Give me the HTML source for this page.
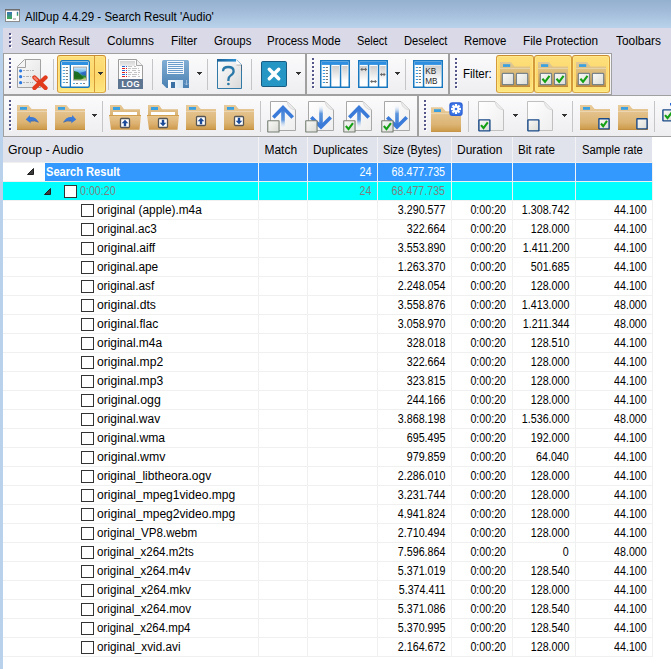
<!DOCTYPE html>
<html><head><meta charset="utf-8"><style>
html,body{margin:0;padding:0;}
body{width:671px;height:669px;overflow:hidden;position:relative;background:#fff;font-family:"Liberation Sans", sans-serif;font-size:12px;}
.t{position:absolute;white-space:nowrap;line-height:14px;font-size:12px;}
svg{display:block;}
</style></head><body>
<div style="position:absolute;left:0px;top:0px;width:671px;height:28px;background:linear-gradient(#95b1d0,#a1bbd9 40%,#bad3eb)"></div><svg style="position:absolute;left:5px;top:9px" width="15" height="13" viewBox="0 0 15 13"><rect x="0.5" y="0.5" width="14" height="12" fill="#fdfdfd" stroke="#8c8c8c"/><rect x="0" y="0" width="15" height="1.6" fill="#6e6e6e"/><linearGradient id="ga" x1="0" y1="0" x2="0" y2="1"><stop offset="0" stop-color="#3a70b8"/><stop offset="1" stop-color="#40b050"/></linearGradient><rect x="2" y="3" width="5" height="7" fill="url(#ga)"/><rect x="11.8" y="2.8" width="1.4" height="4" fill="url(#ga)"/><rect x="8" y="9" width="3" height="2" fill="#c4c4c4"/></svg><div class="t" style="left:25px;top:10px;color:#000;transform:scaleX(0.96);transform-origin:left center;">AllDup 4.4.29 - Search Result 'Audio'</div><div style="position:absolute;left:0px;top:28px;width:3px;height:641px;background:#b9d1ea"></div><div style="position:absolute;left:3px;top:28px;width:668px;height:25px;background:#d9d9e7"></div><div style="position:absolute;left:10px;top:34px;width:2px;height:2px;background:#fff"></div><div style="position:absolute;left:10px;top:38px;width:2px;height:2px;background:#fff"></div><div style="position:absolute;left:10px;top:42px;width:2px;height:2px;background:#fff"></div><div style="position:absolute;left:10px;top:46px;width:2px;height:2px;background:#fff"></div><div style="position:absolute;left:9px;top:33px;width:2px;height:2px;background:#56568a"></div><div style="position:absolute;left:9px;top:37px;width:2px;height:2px;background:#56568a"></div><div style="position:absolute;left:9px;top:41px;width:2px;height:2px;background:#56568a"></div><div style="position:absolute;left:9px;top:45px;width:2px;height:2px;background:#56568a"></div><div class="t" style="left:21px;top:34px;color:#000;transform:scaleX(0.91);transform-origin:left center;">Search Result</div><div class="t" style="left:106.8px;top:34px;color:#000;transform:scaleX(0.99);transform-origin:left center;">Columns</div><div class="t" style="left:171.2px;top:34px;color:#000;transform:scaleX(0.98);transform-origin:left center;">Filter</div><div class="t" style="left:213.6px;top:34px;color:#000;transform:scaleX(0.95);transform-origin:left center;">Groups</div><div class="t" style="left:267.2px;top:34px;color:#000;transform:scaleX(0.96);transform-origin:left center;">Process Mode</div><div class="t" style="left:357.3px;top:34px;color:#000;transform:scaleX(0.91);transform-origin:left center;">Select</div><div class="t" style="left:404.3px;top:34px;color:#000;transform:scaleX(0.93);transform-origin:left center;">Deselect</div><div class="t" style="left:464.3px;top:34px;color:#000;transform:scaleX(0.95);transform-origin:left center;">Remove</div><div class="t" style="left:523px;top:34px;color:#000;transform:scaleX(0.98);transform-origin:left center;">File Protection</div><div class="t" style="left:615.5px;top:34px;color:#000;transform:scaleX(0.99);transform-origin:left center;">Toolbars</div><div style="position:absolute;left:3px;top:53px;width:668px;height:43px;background:#d9d9e7"></div><div style="position:absolute;left:3px;top:53px;width:303px;height:42px;background:linear-gradient(#fbfbfc,#eeeef1);box-sizing:border-box;border:1px solid #a0a0a0"></div><div style="position:absolute;left:10px;top:59px;width:2px;height:2px;background:#fff"></div><div style="position:absolute;left:10px;top:63px;width:2px;height:2px;background:#fff"></div><div style="position:absolute;left:10px;top:67px;width:2px;height:2px;background:#fff"></div><div style="position:absolute;left:10px;top:71px;width:2px;height:2px;background:#fff"></div><div style="position:absolute;left:10px;top:75px;width:2px;height:2px;background:#fff"></div><div style="position:absolute;left:10px;top:79px;width:2px;height:2px;background:#fff"></div><div style="position:absolute;left:10px;top:83px;width:2px;height:2px;background:#fff"></div><div style="position:absolute;left:10px;top:87px;width:2px;height:2px;background:#fff"></div><div style="position:absolute;left:9px;top:58px;width:2px;height:2px;background:#56568a"></div><div style="position:absolute;left:9px;top:62px;width:2px;height:2px;background:#56568a"></div><div style="position:absolute;left:9px;top:66px;width:2px;height:2px;background:#56568a"></div><div style="position:absolute;left:9px;top:70px;width:2px;height:2px;background:#56568a"></div><div style="position:absolute;left:9px;top:74px;width:2px;height:2px;background:#56568a"></div><div style="position:absolute;left:9px;top:78px;width:2px;height:2px;background:#56568a"></div><div style="position:absolute;left:9px;top:82px;width:2px;height:2px;background:#56568a"></div><div style="position:absolute;left:9px;top:86px;width:2px;height:2px;background:#56568a"></div><svg style="position:absolute;left:16px;top:58px" width="32" height="32" viewBox="0 0 32 32"><linearGradient id="gc1" x1="0" y1="0" x2="1" y2="1"><stop offset="0" stop-color="#fbfbfb"/><stop offset="1" stop-color="#e2e2e2"/></linearGradient><path d="M1.5 8.5L8.5 1.5H24.5V29.5H1.5Z" fill="url(#gc1)" stroke="#a2a2a2"/><path d="M9.5 1.5V9.5H1.5" fill="#f4f4f4" stroke="#a2a2a2"/><circle cx="4.6" cy="12.8" r="1.6" fill="#2a78e0"/><circle cx="4.6" cy="18.7" r="1.6" fill="#2a78e0"/><circle cx="4.6" cy="24.7" r="1.6" fill="#2a78e0"/><path d="M7 12.5H18M7 18.5H17M7 24.5H17" stroke="#b4b4b4" stroke-width="1" stroke-dasharray="2 1 3 1 1 1"/><path d="M18.5 19.5L29.5 30M29.5 19.5L18.5 30" stroke="#e23a1c" stroke-width="4.3" stroke-linecap="round"/><path d="M18.5 19.5L21 22" stroke="#f08070" stroke-width="2" stroke-linecap="round"/></svg><div style="position:absolute;left:53px;top:59px;width:1px;height:31px;background:#c5c5c8"></div><div style="position:absolute;left:57px;top:55px;width:49px;height:38px;background:linear-gradient(#fde07c,#fdd76c 55%,#fde67e);border:1px solid;border-color:#c98c30 #d49a3a #dcac46 #d49a3a;border-radius:3px;box-sizing:border-box;box-shadow:inset 0 0 0 1px rgba(255,238,150,0.55)"></div><div style="position:absolute;left:94px;top:56px;width:1px;height:36px;background:#d49a3a"></div><svg style="position:absolute;left:60px;top:60px" width="30" height="28" viewBox="0 0 30 28"><rect x="0.7" y="0.7" width="28.6" height="26.6" rx="1.5" fill="#fff" stroke="#1778c0" stroke-width="1.4"/><rect x="2" y="2" width="26" height="3" fill="#2e90e0"/><rect x="9.7" y="5" width="1.3" height="22" fill="#1778c0"/><rect x="2.8" y="7" width="2.2" height="1" fill="#5aaae0"/><rect x="5.8" y="7" width="2.2" height="1" fill="#808080"/><rect x="2.8" y="10" width="2.2" height="1" fill="#5aaae0"/><rect x="5.8" y="10" width="2.2" height="1" fill="#808080"/><rect x="2.8" y="13" width="2.2" height="1" fill="#5aaae0"/><rect x="5.8" y="13" width="2.2" height="1" fill="#808080"/><rect x="2.8" y="16" width="2.2" height="1" fill="#5aaae0"/><rect x="5.8" y="16" width="2.2" height="1" fill="#808080"/><rect x="2.8" y="19" width="2.2" height="1" fill="#5aaae0"/><rect x="5.8" y="19" width="2.2" height="1" fill="#808080"/><rect x="2.8" y="22" width="2.2" height="1" fill="#5aaae0"/><rect x="5.8" y="22" width="2.2" height="1" fill="#808080"/><rect x="13" y="6.6" width="14" height="14" fill="#a6a6a6"/><linearGradient id="gp1" x1="0" y1="0" x2="0" y2="1"><stop offset="0" stop-color="#c8e8fa"/><stop offset="0.35" stop-color="#70b8ee"/><stop offset="0.5" stop-color="#3a88d0"/><stop offset="0.75" stop-color="#2a8a30"/><stop offset="1" stop-color="#e0e890"/></linearGradient><rect x="14" y="7.6" width="12" height="12" fill="url(#gp1)"/><path d="M14 11L18 12L21 15L24 18L21 19.6H14Z" fill="#1a6a18" opacity="0.9"/><path d="M20 13L26 11V15.5L23 15Z" fill="#2a64c0" opacity="0.85"/><rect x="13" y="23" width="2" height="1" fill="#5aaae0"/><rect x="16" y="23" width="2" height="1" fill="#808080"/><rect x="20" y="23" width="2" height="1" fill="#5aaae0"/><rect x="23" y="23" width="2" height="1" fill="#808080"/></svg><div style="position:absolute;left:98px;top:72px;width:5px;height:1px;background:#333"></div><div style="position:absolute;left:99px;top:73px;width:3px;height:1px;background:#333"></div><div style="position:absolute;left:100px;top:74px;width:1px;height:1px;background:#333"></div><div style="position:absolute;left:108px;top:59px;width:1px;height:31px;background:#c5c5c8"></div><svg style="position:absolute;left:118px;top:59px" width="26" height="31" viewBox="0 0 26 31"><path d="M0.5 0.5H18.5L24.5 6.5V29.5H0.5Z" fill="#fcfcfc" stroke="#9c9c9c"/><path d="M18.5 0.5V6.5H24.5" fill="#f2f2f2" stroke="#a8a8a8"/><linearGradient id="glg" x1="0" y1="0" x2="0" y2="1"><stop offset="0" stop-color="#d4d4d4"/><stop offset="1" stop-color="#ececec"/></linearGradient><rect x="2" y="2" width="15" height="5" fill="url(#glg)"/><rect x="4" y="7" width="3" height="1" fill="#2a6ad0"/><rect x="8" y="7" width="1" height="1" fill="#2a6ad0"/><path d="M10 7.5H22" stroke="#c4c4c4" stroke-width="1" stroke-dasharray="4 2 2 9"/><rect x="4" y="9" width="3" height="1" fill="#e02020"/><rect x="8" y="9" width="1" height="1" fill="#e02020"/><path d="M10 9.5H22" stroke="#c4c4c4" stroke-width="1" stroke-dasharray="3 1 5 1 1 9"/><rect x="4" y="11" width="3" height="1" fill="#2a6ad0"/><rect x="8" y="11" width="1" height="1" fill="#2a6ad0"/><path d="M10 11.5H22" stroke="#c4c4c4" stroke-width="1" stroke-dasharray="2 2 4 2 3"/><rect x="4" y="13" width="3" height="1" fill="#e02020"/><rect x="8" y="13" width="1" height="1" fill="#e02020"/><path d="M10 13.5H22" stroke="#c4c4c4" stroke-width="1" stroke-dasharray="4 2 3 1 2"/><rect x="4" y="15" width="3" height="1" fill="#2a6ad0"/><rect x="8" y="15" width="1" height="1" fill="#2a6ad0"/><path d="M10 15.5H22" stroke="#c4c4c4" stroke-width="1" stroke-dasharray="3 1 5 1 1 9"/><rect x="4" y="17" width="3" height="1" fill="#e02020"/><rect x="8" y="17" width="1" height="1" fill="#e02020"/><path d="M10 17.5H22" stroke="#c4c4c4" stroke-width="1" stroke-dasharray="2 2 4 2 3"/><rect x="0" y="20" width="25" height="10" fill="#5e7591"/><text x="12.6" y="27.9" font-size="8.2" font-family="Liberation Sans" fill="#fff" text-anchor="middle" font-weight="bold" letter-spacing="0.2">LOG</text></svg><div style="position:absolute;left:152px;top:59px;width:1px;height:31px;background:#c5c5c8"></div><svg style="position:absolute;left:162px;top:60px" width="27" height="28" viewBox="0 0 27 28"><linearGradient id="gs1" x1="0" y1="0" x2="0" y2="1"><stop offset="0" stop-color="#82aed4"/><stop offset="1" stop-color="#4a80b2"/></linearGradient><linearGradient id="gs2" x1="0" y1="0" x2="1" y2="0"><stop offset="0" stop-color="#ffffff"/><stop offset="1" stop-color="#cfe2f0"/></linearGradient><path d="M1.5 0H25.5Q27 0 27 1.5V28H4.5L0 23.5V1.5Q0 0 1.5 0Z" fill="url(#gs1)"/><rect x="5" y="1" width="17" height="13" fill="#f4f8fc"/><rect x="6" y="2" width="15" height="1" fill="#6a9ccc"/><rect x="6" y="4" width="15" height="1" fill="#6a9ccc"/><rect x="6" y="6" width="15" height="1" fill="#6a9ccc"/><rect x="6" y="8" width="15" height="1" fill="#6a9ccc"/><rect x="6" y="10" width="15" height="1" fill="#6a9ccc"/><rect x="6" y="12" width="15" height="1" fill="#6a9ccc"/><rect x="6" y="20" width="15" height="8" fill="url(#gs2)"/><rect x="9" y="22" width="4" height="6" fill="#3a70a4"/><path d="M24.5 20V25M22.8 23.3L24.5 25L26.2 23.3" stroke="#a8c8e4" stroke-width="0.8" fill="none"/></svg><div style="position:absolute;left:197px;top:72px;width:5px;height:1px;background:#333"></div><div style="position:absolute;left:198px;top:73px;width:3px;height:1px;background:#333"></div><div style="position:absolute;left:199px;top:74px;width:1px;height:1px;background:#333"></div><div style="position:absolute;left:207px;top:59px;width:1px;height:31px;background:#c5c5c8"></div><svg style="position:absolute;left:217px;top:59px" width="25" height="31" viewBox="0 0 25 31"><linearGradient id="gh1" x1="0" y1="0" x2="1" y2="1"><stop offset="0" stop-color="#ffffff"/><stop offset="0.6" stop-color="#e8e8e8"/><stop offset="1" stop-color="#d8d8d8"/></linearGradient><linearGradient id="gh2" x1="0" y1="0" x2="1" y2="0"><stop offset="0" stop-color="#1a5f96"/><stop offset="1" stop-color="#2d8fd0"/></linearGradient><path d="M0.5 0.5H19L24.5 6V29.5H0.5Z" fill="url(#gh1)" stroke="#3279a8"/><rect x="0" y="0" width="19" height="2.6" fill="url(#gh2)"/><path d="M19 0.5L24.5 6H19.5Z" fill="#fff"/><path d="M19.5 6H24.5V12" fill="none" stroke="#555" stroke-width="0.8" opacity="0.5"/><path d="M6 12.2Q6 8 11.3 8Q16.6 8 16.6 12.2Q16.6 14.6 13.8 16.4Q11.4 18 11.4 20.8V22" fill="none" stroke="#2a78a8" stroke-width="2.3"/><circle cx="11.4" cy="25" r="1.35" fill="#2a78a8"/></svg><div style="position:absolute;left:251px;top:59px;width:1px;height:31px;background:#c5c5c8"></div><svg style="position:absolute;left:261px;top:61px" width="26" height="26" viewBox="0 0 26 26"><rect x="0.5" y="0.5" width="25" height="25" rx="1.3" fill="#2696c4" stroke="#185c82"/><path d="M8.3 8.3L17.7 17.7M17.7 8.3L8.3 17.7" stroke="#fff" stroke-width="3.5" stroke-linecap="round"/></svg><div style="position:absolute;left:296px;top:72px;width:5px;height:1px;background:#333"></div><div style="position:absolute;left:297px;top:73px;width:3px;height:1px;background:#333"></div><div style="position:absolute;left:298px;top:74px;width:1px;height:1px;background:#333"></div><div style="position:absolute;left:306px;top:53px;width:143px;height:42px;background:linear-gradient(#fbfbfc,#eeeef1);box-sizing:border-box;border:1px solid #a0a0a0"></div><div style="position:absolute;left:313px;top:59px;width:2px;height:2px;background:#fff"></div><div style="position:absolute;left:313px;top:63px;width:2px;height:2px;background:#fff"></div><div style="position:absolute;left:313px;top:67px;width:2px;height:2px;background:#fff"></div><div style="position:absolute;left:313px;top:71px;width:2px;height:2px;background:#fff"></div><div style="position:absolute;left:313px;top:75px;width:2px;height:2px;background:#fff"></div><div style="position:absolute;left:313px;top:79px;width:2px;height:2px;background:#fff"></div><div style="position:absolute;left:313px;top:83px;width:2px;height:2px;background:#fff"></div><div style="position:absolute;left:313px;top:87px;width:2px;height:2px;background:#fff"></div><div style="position:absolute;left:312px;top:58px;width:2px;height:2px;background:#56568a"></div><div style="position:absolute;left:312px;top:62px;width:2px;height:2px;background:#56568a"></div><div style="position:absolute;left:312px;top:66px;width:2px;height:2px;background:#56568a"></div><div style="position:absolute;left:312px;top:70px;width:2px;height:2px;background:#56568a"></div><div style="position:absolute;left:312px;top:74px;width:2px;height:2px;background:#56568a"></div><div style="position:absolute;left:312px;top:78px;width:2px;height:2px;background:#56568a"></div><div style="position:absolute;left:312px;top:82px;width:2px;height:2px;background:#56568a"></div><div style="position:absolute;left:312px;top:86px;width:2px;height:2px;background:#56568a"></div><svg style="position:absolute;left:320px;top:60px" width="30" height="28" viewBox="0 0 30 28"><linearGradient id="gg1" x1="0" y1="0" x2="0" y2="1"><stop offset="0" stop-color="#cdcdcd"/><stop offset="0.75" stop-color="#ffffff" stop-opacity="1"/><stop offset="1" stop-color="#ffffff"/></linearGradient><rect x="0.75" y="0.75" width="28.5" height="26.5" fill="#fff" stroke="#1778c0" stroke-width="1.5"/><rect x="1.5" y="1.5" width="27" height="3.4" fill="#2e8ee0"/><rect x="9.8" y="4.5" width="1.5" height="23" fill="#1778c0"/><rect x="19.8" y="4.5" width="1.5" height="23" fill="#1778c0"/><rect x="12.2" y="6" width="6.8" height="20" fill="url(#gg1)"/><rect x="22.2" y="6" width="5.5" height="20" fill="url(#gg1)"/><rect x="2.8" y="7" width="2.2" height="1" fill="#3a9ae0"/><rect x="5.8" y="7" width="2.2" height="1" fill="#777"/><rect x="2.8" y="10" width="2.2" height="1" fill="#3a9ae0"/><rect x="5.8" y="10" width="2.2" height="1" fill="#777"/><rect x="2.8" y="13" width="2.2" height="1" fill="#3a9ae0"/><rect x="5.8" y="13" width="2.2" height="1" fill="#777"/><rect x="2.8" y="16" width="2.2" height="1" fill="#3a9ae0"/><rect x="5.8" y="16" width="2.2" height="1" fill="#777"/><rect x="2.8" y="19" width="2.2" height="1" fill="#3a9ae0"/><rect x="5.8" y="19" width="2.2" height="1" fill="#777"/><rect x="2.8" y="22" width="2.2" height="1" fill="#3a9ae0"/><rect x="5.8" y="22" width="2.2" height="1" fill="#777"/></svg><svg style="position:absolute;left:358px;top:60px" width="30" height="28" viewBox="0 0 30 28"><linearGradient id="gg2" x1="0" y1="0" x2="0" y2="1"><stop offset="0" stop-color="#cdcdcd"/><stop offset="0.75" stop-color="#ffffff" stop-opacity="1"/><stop offset="1" stop-color="#ffffff"/></linearGradient><rect x="0.75" y="0.75" width="28.5" height="26.5" fill="#fff" stroke="#1778c0" stroke-width="1.5"/><rect x="1.5" y="1.5" width="27" height="3.4" fill="#2e8ee0"/><rect x="9.8" y="4.5" width="1.5" height="23" fill="#1778c0"/><rect x="19.8" y="4.5" width="1.5" height="23" fill="#1778c0"/><rect x="2" y="6" width="7" height="20" fill="url(#gg2)"/><rect x="12.2" y="6" width="6.8" height="20" fill="url(#gg2)"/><rect x="22.2" y="6" width="5.5" height="20" fill="url(#gg2)"/><path d="M3.2 9.4H8.2" stroke="#6a6a6a" stroke-width="1.2"/><path d="M2.2 9.4L4.4 7.6000000000000005V11.200000000000001Z" fill="#6a6a6a"/><path d="M9.2 9.4L6.999999999999999 7.6000000000000005V11.200000000000001Z" fill="#6a6a6a"/><path d="M13 21.5H18" stroke="#6a6a6a" stroke-width="1.2"/><path d="M12 21.5L14.2 19.7V23.3Z" fill="#6a6a6a"/><path d="M19 21.5L16.8 19.7V23.3Z" fill="#6a6a6a"/><path d="M22.8 14.5H26.8" stroke="#6a6a6a" stroke-width="1.2"/><path d="M21.8 14.5L24.0 12.7V16.3Z" fill="#6a6a6a"/><path d="M27.8 14.5L25.6 12.7V16.3Z" fill="#6a6a6a"/></svg><div style="position:absolute;left:395px;top:72px;width:5px;height:1px;background:#333"></div><div style="position:absolute;left:396px;top:73px;width:3px;height:1px;background:#333"></div><div style="position:absolute;left:397px;top:74px;width:1px;height:1px;background:#333"></div><div style="position:absolute;left:405px;top:59px;width:1px;height:31px;background:#c5c5c8"></div><svg style="position:absolute;left:413px;top:60px" width="30" height="28" viewBox="0 0 30 28"><linearGradient id="gg3" x1="0" y1="0" x2="0" y2="1"><stop offset="0" stop-color="#cdcdcd"/><stop offset="0.75" stop-color="#ffffff" stop-opacity="1"/><stop offset="1" stop-color="#ffffff"/></linearGradient><rect x="0.75" y="0.75" width="28.5" height="26.5" fill="#fff" stroke="#1778c0" stroke-width="1.5"/><rect x="1.5" y="1.5" width="27" height="3.4" fill="#2e8ee0"/><rect x="9.8" y="4.5" width="1.5" height="23" fill="#1778c0"/><rect x="12.2" y="5.5" width="16" height="21" fill="url(#gg3)"/><rect x="2.8" y="7" width="2.2" height="1" fill="#3a9ae0"/><rect x="5.8" y="7" width="2.2" height="1" fill="#777"/><rect x="2.8" y="10" width="2.2" height="1" fill="#3a9ae0"/><rect x="5.8" y="10" width="2.2" height="1" fill="#777"/><rect x="2.8" y="13" width="2.2" height="1" fill="#3a9ae0"/><rect x="5.8" y="13" width="2.2" height="1" fill="#777"/><rect x="2.8" y="16" width="2.2" height="1" fill="#3a9ae0"/><rect x="5.8" y="16" width="2.2" height="1" fill="#777"/><rect x="2.8" y="19" width="2.2" height="1" fill="#3a9ae0"/><rect x="5.8" y="19" width="2.2" height="1" fill="#777"/><rect x="2.8" y="22" width="2.2" height="1" fill="#3a9ae0"/><rect x="5.8" y="22" width="2.2" height="1" fill="#777"/><text x="12.3" y="13.9" font-size="8.2" font-family="Liberation Sans" fill="#2a2a2a">KB</text><text x="12.3" y="24" font-size="8.2" font-family="Liberation Sans" fill="#2a2a2a">MB</text></svg><div style="position:absolute;left:449px;top:53px;width:163px;height:42px;background:linear-gradient(#fbfbfc,#eeeef1);box-sizing:border-box;border:1px solid #a0a0a0"></div><div style="position:absolute;left:456px;top:59px;width:2px;height:2px;background:#fff"></div><div style="position:absolute;left:456px;top:63px;width:2px;height:2px;background:#fff"></div><div style="position:absolute;left:456px;top:67px;width:2px;height:2px;background:#fff"></div><div style="position:absolute;left:456px;top:71px;width:2px;height:2px;background:#fff"></div><div style="position:absolute;left:456px;top:75px;width:2px;height:2px;background:#fff"></div><div style="position:absolute;left:456px;top:79px;width:2px;height:2px;background:#fff"></div><div style="position:absolute;left:456px;top:83px;width:2px;height:2px;background:#fff"></div><div style="position:absolute;left:456px;top:87px;width:2px;height:2px;background:#fff"></div><div style="position:absolute;left:455px;top:58px;width:2px;height:2px;background:#56568a"></div><div style="position:absolute;left:455px;top:62px;width:2px;height:2px;background:#56568a"></div><div style="position:absolute;left:455px;top:66px;width:2px;height:2px;background:#56568a"></div><div style="position:absolute;left:455px;top:70px;width:2px;height:2px;background:#56568a"></div><div style="position:absolute;left:455px;top:74px;width:2px;height:2px;background:#56568a"></div><div style="position:absolute;left:455px;top:78px;width:2px;height:2px;background:#56568a"></div><div style="position:absolute;left:455px;top:82px;width:2px;height:2px;background:#56568a"></div><div style="position:absolute;left:455px;top:86px;width:2px;height:2px;background:#56568a"></div><div class="t" style="left:463px;top:66.5px;color:#000;transform:scaleX(0.96);transform-origin:left center;">Filter:</div><div style="position:absolute;left:496px;top:55px;width:38px;height:38px;background:linear-gradient(#fde07c,#fdd76c 55%,#fde67e);border:1px solid;border-color:#c98c30 #d49a3a #dcac46 #d49a3a;border-radius:3px;box-sizing:border-box;box-shadow:inset 0 0 0 1px rgba(255,238,150,0.55)"></div><svg style="position:absolute;left:500px;top:62px" width="30" height="25" viewBox="0 0 30 25"><linearGradient id="gff1" x1="0" y1="0" x2="0" y2="1"><stop offset="0" stop-color="#cfbfa8" stop-opacity="0.65"/><stop offset="0.6" stop-color="#d0a868" stop-opacity="0.75"/><stop offset="1" stop-color="#c08a3a" stop-opacity="0.9"/></linearGradient><path d="M0 0H11L14.5 4.5H30V25H0Z" fill="url(#gff1)"/><rect x="0" y="6" width="30" height="1" fill="#fff" opacity="0.3"/><rect x="0" y="23.5" width="30" height="1.5" fill="#b88030" opacity="0.5"/><rect x="3" y="2.2" width="7.2" height="2.7" fill="#3aa0e0"/><linearGradient id="cbg2" x1="0" y1="0" x2="1" y2="1"><stop offset="0" stop-color="#fafaf8"/><stop offset="1" stop-color="#dadad6"/></linearGradient><rect x="2.3" y="11.4" width="11.3" height="11.3" rx="0.8" fill="url(#cbg2)" stroke="#78848a" stroke-width="1.25"/><linearGradient id="cbg3" x1="0" y1="0" x2="1" y2="1"><stop offset="0" stop-color="#fafaf8"/><stop offset="1" stop-color="#dadad6"/></linearGradient><rect x="16.4" y="11.4" width="11.3" height="11.3" rx="0.8" fill="url(#cbg3)" stroke="#78848a" stroke-width="1.25"/></svg><div style="position:absolute;left:534px;top:55px;width:38px;height:38px;background:linear-gradient(#fde07c,#fdd76c 55%,#fde67e);border:1px solid;border-color:#c98c30 #d49a3a #dcac46 #d49a3a;border-radius:3px;box-sizing:border-box;box-shadow:inset 0 0 0 1px rgba(255,238,150,0.55)"></div><svg style="position:absolute;left:538px;top:62px" width="30" height="25" viewBox="0 0 30 25"><linearGradient id="gff4" x1="0" y1="0" x2="0" y2="1"><stop offset="0" stop-color="#cfbfa8" stop-opacity="0.65"/><stop offset="0.6" stop-color="#d0a868" stop-opacity="0.75"/><stop offset="1" stop-color="#c08a3a" stop-opacity="0.9"/></linearGradient><path d="M0 0H11L14.5 4.5H30V25H0Z" fill="url(#gff4)"/><rect x="0" y="6" width="30" height="1" fill="#fff" opacity="0.3"/><rect x="0" y="23.5" width="30" height="1.5" fill="#b88030" opacity="0.5"/><rect x="3" y="2.2" width="7.2" height="2.7" fill="#3aa0e0"/><linearGradient id="cbg5" x1="0" y1="0" x2="1" y2="1"><stop offset="0" stop-color="#fafaf8"/><stop offset="1" stop-color="#dadad6"/></linearGradient><rect x="2.3" y="11.4" width="11.3" height="11.3" rx="0.8" fill="url(#cbg5)" stroke="#78848a" stroke-width="1.25"/><path d="M4.4 16.711L7.046 19.762L11.500000000000002 13.886000000000001" stroke="#14a014" stroke-width="2.1" fill="none"/><linearGradient id="cbg6" x1="0" y1="0" x2="1" y2="1"><stop offset="0" stop-color="#fafaf8"/><stop offset="1" stop-color="#dadad6"/></linearGradient><rect x="16.4" y="11.4" width="11.3" height="11.3" rx="0.8" fill="url(#cbg6)" stroke="#78848a" stroke-width="1.25"/><path d="M18.5 16.711L21.146 19.762L25.599999999999998 13.886000000000001" stroke="#14a014" stroke-width="2.1" fill="none"/></svg><div style="position:absolute;left:572px;top:55px;width:38px;height:38px;background:linear-gradient(#fde07c,#fdd76c 55%,#fde67e);border:1px solid;border-color:#c98c30 #d49a3a #dcac46 #d49a3a;border-radius:3px;box-sizing:border-box;box-shadow:inset 0 0 0 1px rgba(255,238,150,0.55)"></div><svg style="position:absolute;left:576px;top:62px" width="30" height="25" viewBox="0 0 30 25"><linearGradient id="gff7" x1="0" y1="0" x2="0" y2="1"><stop offset="0" stop-color="#cfbfa8" stop-opacity="0.65"/><stop offset="0.6" stop-color="#d0a868" stop-opacity="0.75"/><stop offset="1" stop-color="#c08a3a" stop-opacity="0.9"/></linearGradient><path d="M0 0H11L14.5 4.5H30V25H0Z" fill="url(#gff7)"/><rect x="0" y="6" width="30" height="1" fill="#fff" opacity="0.3"/><rect x="0" y="23.5" width="30" height="1.5" fill="#b88030" opacity="0.5"/><rect x="3" y="2.2" width="7.2" height="2.7" fill="#3aa0e0"/><linearGradient id="cbg8" x1="0" y1="0" x2="1" y2="1"><stop offset="0" stop-color="#fafaf8"/><stop offset="1" stop-color="#dadad6"/></linearGradient><rect x="2.3" y="11.4" width="11.3" height="11.3" rx="0.8" fill="url(#cbg8)" stroke="#78848a" stroke-width="1.25"/><path d="M4.4 16.711L7.046 19.762L11.500000000000002 13.886000000000001" stroke="#14a014" stroke-width="2.1" fill="none"/><linearGradient id="cbg9" x1="0" y1="0" x2="1" y2="1"><stop offset="0" stop-color="#fafaf8"/><stop offset="1" stop-color="#dadad6"/></linearGradient><rect x="16.4" y="11.4" width="11.3" height="11.3" rx="0.8" fill="url(#cbg9)" stroke="#78848a" stroke-width="1.25"/></svg><div style="position:absolute;left:3px;top:95px;width:668px;height:42px;background:linear-gradient(#fbfbfc,#eeeef1);border-top:1px solid #a0a0a0;border-bottom:1px solid #a0a0a0;box-sizing:border-box;border-left:1px solid #a0a0a0"></div><div style="position:absolute;left:10px;top:101px;width:2px;height:2px;background:#fff"></div><div style="position:absolute;left:10px;top:105px;width:2px;height:2px;background:#fff"></div><div style="position:absolute;left:10px;top:109px;width:2px;height:2px;background:#fff"></div><div style="position:absolute;left:10px;top:113px;width:2px;height:2px;background:#fff"></div><div style="position:absolute;left:10px;top:117px;width:2px;height:2px;background:#fff"></div><div style="position:absolute;left:10px;top:121px;width:2px;height:2px;background:#fff"></div><div style="position:absolute;left:10px;top:125px;width:2px;height:2px;background:#fff"></div><div style="position:absolute;left:10px;top:129px;width:2px;height:2px;background:#fff"></div><div style="position:absolute;left:9px;top:100px;width:2px;height:2px;background:#56568a"></div><div style="position:absolute;left:9px;top:104px;width:2px;height:2px;background:#56568a"></div><div style="position:absolute;left:9px;top:108px;width:2px;height:2px;background:#56568a"></div><div style="position:absolute;left:9px;top:112px;width:2px;height:2px;background:#56568a"></div><div style="position:absolute;left:9px;top:116px;width:2px;height:2px;background:#56568a"></div><div style="position:absolute;left:9px;top:120px;width:2px;height:2px;background:#56568a"></div><div style="position:absolute;left:9px;top:124px;width:2px;height:2px;background:#56568a"></div><div style="position:absolute;left:9px;top:128px;width:2px;height:2px;background:#56568a"></div><svg style="position:absolute;left:17px;top:105px" width="31" height="25" viewBox="0 0 31 25"><linearGradient id="gf10" x1="0" y1="0" x2="0" y2="1"><stop offset="0" stop-color="#e8cc9c"/><stop offset="0.7" stop-color="#dcb474"/><stop offset="1" stop-color="#cc9a48"/></linearGradient><path d="M0 0H11.3L14.7 4H30V24.6H0Z" fill="url(#gf10)"/><path d="M0 24.6H30" stroke="#c08a38" stroke-width="1"/><rect x="0" y="6" width="30" height="0.9" fill="#fff" opacity="0.35"/><rect x="3" y="2" width="7" height="2.8" fill="#3aa0e0"/><path d="M8.8 14.6L12.9 10L12.9 12.1Q19 11.6 21.6 17.2Q18 15.2 13.3 16.2L14 18.6Z" fill="#3a7ad6"/><path d="M13.3 16.2Q18 15.2 21.6 17.2" stroke="#2a5aa8" stroke-width="0.7" fill="none"/></svg><svg style="position:absolute;left:55px;top:105px" width="31" height="25" viewBox="0 0 31 25"><linearGradient id="gf11" x1="0" y1="0" x2="0" y2="1"><stop offset="0" stop-color="#e8cc9c"/><stop offset="0.7" stop-color="#dcb474"/><stop offset="1" stop-color="#cc9a48"/></linearGradient><path d="M0 0H11.3L14.7 4H30V24.6H0Z" fill="url(#gf11)"/><path d="M0 24.6H30" stroke="#c08a38" stroke-width="1"/><rect x="0" y="6" width="30" height="0.9" fill="#fff" opacity="0.35"/><rect x="3" y="2" width="7" height="2.8" fill="#3aa0e0"/><g transform="translate(30,0) scale(-1,1)"><path d="M8.8 14.6L12.9 10L12.9 12.1Q19 11.6 21.6 17.2Q18 15.2 13.3 16.2L14 18.6Z" fill="#3a7ad6"/><path d="M13.3 16.2Q18 15.2 21.6 17.2" stroke="#2a5aa8" stroke-width="0.7" fill="none"/></g></svg><div style="position:absolute;left:92px;top:114px;width:5px;height:1px;background:#333"></div><div style="position:absolute;left:93px;top:115px;width:3px;height:1px;background:#333"></div><div style="position:absolute;left:94px;top:116px;width:1px;height:1px;background:#333"></div><div style="position:absolute;left:102px;top:101px;width:1px;height:31px;background:#c5c5c8"></div><svg style="position:absolute;left:109px;top:105px" width="33" height="25" viewBox="0 0 33 25"><linearGradient id="go12" x1="0" y1="0" x2="0" y2="1"><stop offset="0" stop-color="#e6c896"/><stop offset="1" stop-color="#d8b070"/></linearGradient><linearGradient id="go13" x1="0" y1="0" x2="0" y2="1"><stop offset="0" stop-color="#e8c890"/><stop offset="0.6" stop-color="#dcb070"/><stop offset="1" stop-color="#cc9848"/></linearGradient><path d="M1 0H12L15 4.2H31V12H1Z" fill="url(#go12)"/><rect x="4" y="2" width="7" height="3" fill="#3aa0e0"/><rect x="4" y="7" width="24" height="3" fill="#fff"/><path d="M0 10H32L30.5 24.7H2Z" fill="url(#go13)"/><path d="M0 10.5H32" stroke="#d0a050" stroke-width="1"/><rect x="11.5" y="13.5" width="9" height="9" rx="1" fill="#fff" stroke="#555" stroke-width="1.3"/><path d="M16 14.8L12.7 18.2H14.8V21.3H17.2V18.2H19.3Z" fill="#1a4a98"/></svg><svg style="position:absolute;left:147px;top:105px" width="33" height="25" viewBox="0 0 33 25"><linearGradient id="go14" x1="0" y1="0" x2="0" y2="1"><stop offset="0" stop-color="#e6c896"/><stop offset="1" stop-color="#d8b070"/></linearGradient><linearGradient id="go15" x1="0" y1="0" x2="0" y2="1"><stop offset="0" stop-color="#e8c890"/><stop offset="0.6" stop-color="#dcb070"/><stop offset="1" stop-color="#cc9848"/></linearGradient><path d="M1 0H12L15 4.2H31V12H1Z" fill="url(#go14)"/><rect x="4" y="2" width="7" height="3" fill="#3aa0e0"/><rect x="4" y="7" width="24" height="3" fill="#fff"/><path d="M0 10H32L30.5 24.7H2Z" fill="url(#go15)"/><path d="M0 10.5H32" stroke="#d0a050" stroke-width="1"/><rect x="11.5" y="13.5" width="9" height="9" rx="1" fill="#fff" stroke="#555" stroke-width="1.3"/><path d="M16 21.2L12.7 17.8H14.8V14.7H17.2V17.8H19.3Z" fill="#1a4a98"/></svg><svg style="position:absolute;left:186px;top:105px" width="30" height="25" viewBox="0 0 30 25"><linearGradient id="gf16" x1="0" y1="0" x2="0" y2="1"><stop offset="0" stop-color="#e8cc9c"/><stop offset="0.7" stop-color="#dcb474"/><stop offset="1" stop-color="#cc9a48"/></linearGradient><path d="M0 0H11.3L14.7 4H30V24.6H0Z" fill="url(#gf16)"/><path d="M0 24.6H30" stroke="#c08a38" stroke-width="1"/><rect x="0" y="6" width="30" height="0.9" fill="#fff" opacity="0.35"/><rect x="3" y="2" width="7" height="2.8" fill="#3aa0e0"/><rect x="10.5" y="11.5" width="9" height="9" rx="1" fill="#fff" stroke="#555" stroke-width="1.3"/><path d="M15 12.8L11.7 16.2H13.8V19.3H16.2V16.2H18.3Z" fill="#1a4a98"/></svg><svg style="position:absolute;left:224px;top:105px" width="30" height="25" viewBox="0 0 30 25"><linearGradient id="gf17" x1="0" y1="0" x2="0" y2="1"><stop offset="0" stop-color="#e8cc9c"/><stop offset="0.7" stop-color="#dcb474"/><stop offset="1" stop-color="#cc9a48"/></linearGradient><path d="M0 0H11.3L14.7 4H30V24.6H0Z" fill="url(#gf17)"/><path d="M0 24.6H30" stroke="#c08a38" stroke-width="1"/><rect x="0" y="6" width="30" height="0.9" fill="#fff" opacity="0.35"/><rect x="3" y="2" width="7" height="2.8" fill="#3aa0e0"/><rect x="10.5" y="11.5" width="9" height="9" rx="1" fill="#fff" stroke="#555" stroke-width="1.3"/><path d="M15 19.2L11.7 15.8H13.8V12.7H16.2V15.8H18.3Z" fill="#1a4a98"/></svg><div style="position:absolute;left:260px;top:101px;width:1px;height:31px;background:#c5c5c8"></div><svg style="position:absolute;left:267px;top:101px" width="30" height="32" viewBox="0 0 30 32"><linearGradient id="gd21" x1="0" y1="0" x2="1" y2="1"><stop offset="0" stop-color="#ffffff"/><stop offset="1" stop-color="#eeeeee"/></linearGradient><path d="M3.5 0.5H20.0L28.5 9V29.5H3.5Z" fill="url(#gd21)" stroke="#a8a8a8"/><path d="M20.0 0.5Q21.0 8 28.5 9" fill="#ececec" stroke="#ccc" stroke-width="0.6"/><linearGradient id="ga20" x1="0" y1="0" x2="0" y2="1"><stop offset="0" stop-color="#3a7ad8"/><stop offset="0.6" stop-color="#5a94dc"/><stop offset="1" stop-color="#ffffff" stop-opacity="0.1"/></linearGradient><rect x="14.2" y="6" width="3.6" height="21.5" fill="url(#ga20)"/><path d="M6.3 16.6L16 6.6L25.7 16.6" stroke="#3a7ad8" stroke-width="3.6" fill="none"/><linearGradient id="cbg22" x1="0" y1="0" x2="1" y2="1"><stop offset="0" stop-color="#fafaf8"/><stop offset="1" stop-color="#dadad6"/></linearGradient><rect x="0.75" y="19.75" width="11.3" height="11.3" rx="0.3" fill="url(#cbg22)" stroke="#767e72" stroke-width="1.1"/></svg><svg style="position:absolute;left:305px;top:101px" width="30" height="32" viewBox="0 0 30 32"><linearGradient id="gd24" x1="0" y1="0" x2="1" y2="1"><stop offset="0" stop-color="#ffffff"/><stop offset="1" stop-color="#eeeeee"/></linearGradient><path d="M3.5 0.5H20.0L28.5 9V29.5H3.5Z" fill="url(#gd24)" stroke="#a8a8a8"/><path d="M20.0 0.5Q21.0 8 28.5 9" fill="#ececec" stroke="#ccc" stroke-width="0.6"/><linearGradient id="ga23" x1="0" y1="0" x2="0" y2="1"><stop offset="0" stop-color="#ffffff" stop-opacity="0.1"/><stop offset="0.4" stop-color="#5a94dc"/><stop offset="1" stop-color="#3a7ad8"/></linearGradient><rect x="14.2" y="4" width="3.6" height="21.5" fill="url(#ga23)"/><path d="M6.3 16.2L16 26L25.7 16.2" stroke="#3a7ad8" stroke-width="3.6" fill="none"/><linearGradient id="cbg25" x1="0" y1="0" x2="1" y2="1"><stop offset="0" stop-color="#fafaf8"/><stop offset="1" stop-color="#dadad6"/></linearGradient><rect x="0.75" y="19.75" width="11.3" height="11.3" rx="0.3" fill="url(#cbg25)" stroke="#767e72" stroke-width="1.1"/></svg><svg style="position:absolute;left:343px;top:101px" width="30" height="32" viewBox="0 0 30 32"><linearGradient id="gd27" x1="0" y1="0" x2="1" y2="1"><stop offset="0" stop-color="#ffffff"/><stop offset="1" stop-color="#eeeeee"/></linearGradient><path d="M3.5 0.5H20.0L28.5 9V29.5H3.5Z" fill="url(#gd27)" stroke="#a8a8a8"/><path d="M20.0 0.5Q21.0 8 28.5 9" fill="#ececec" stroke="#ccc" stroke-width="0.6"/><linearGradient id="ga26" x1="0" y1="0" x2="0" y2="1"><stop offset="0" stop-color="#3a7ad8"/><stop offset="0.6" stop-color="#5a94dc"/><stop offset="1" stop-color="#ffffff" stop-opacity="0.1"/></linearGradient><rect x="14.2" y="6" width="3.6" height="21.5" fill="url(#ga26)"/><path d="M6.3 16.6L16 6.6L25.7 16.6" stroke="#3a7ad8" stroke-width="3.6" fill="none"/><linearGradient id="cbg28" x1="0" y1="0" x2="1" y2="1"><stop offset="0" stop-color="#fafaf8"/><stop offset="1" stop-color="#dadad6"/></linearGradient><rect x="0.75" y="19.75" width="11.3" height="11.3" rx="0.3" fill="url(#cbg28)" stroke="#767e72" stroke-width="1.1"/><path d="M2.85 25.061L5.496 28.112000000000002L9.950000000000001 22.236" stroke="#14a014" stroke-width="2.1" fill="none"/></svg><svg style="position:absolute;left:381px;top:101px" width="30" height="32" viewBox="0 0 30 32"><linearGradient id="gd30" x1="0" y1="0" x2="1" y2="1"><stop offset="0" stop-color="#ffffff"/><stop offset="1" stop-color="#eeeeee"/></linearGradient><path d="M3.5 0.5H20.0L28.5 9V29.5H3.5Z" fill="url(#gd30)" stroke="#a8a8a8"/><path d="M20.0 0.5Q21.0 8 28.5 9" fill="#ececec" stroke="#ccc" stroke-width="0.6"/><linearGradient id="ga29" x1="0" y1="0" x2="0" y2="1"><stop offset="0" stop-color="#ffffff" stop-opacity="0.1"/><stop offset="0.4" stop-color="#5a94dc"/><stop offset="1" stop-color="#3a7ad8"/></linearGradient><rect x="14.2" y="4" width="3.6" height="21.5" fill="url(#ga29)"/><path d="M6.3 16.2L16 26L25.7 16.2" stroke="#3a7ad8" stroke-width="3.6" fill="none"/><linearGradient id="cbg31" x1="0" y1="0" x2="1" y2="1"><stop offset="0" stop-color="#fafaf8"/><stop offset="1" stop-color="#dadad6"/></linearGradient><rect x="0.75" y="19.75" width="11.3" height="11.3" rx="0.3" fill="url(#cbg31)" stroke="#767e72" stroke-width="1.1"/><path d="M2.85 25.061L5.496 28.112000000000002L9.950000000000001 22.236" stroke="#14a014" stroke-width="2.1" fill="none"/></svg><div style="position:absolute;left:417px;top:96px;width:2px;height:40px;background:#a0a0a0"></div><div style="position:absolute;left:425px;top:101px;width:2px;height:2px;background:#fff"></div><div style="position:absolute;left:425px;top:105px;width:2px;height:2px;background:#fff"></div><div style="position:absolute;left:425px;top:109px;width:2px;height:2px;background:#fff"></div><div style="position:absolute;left:425px;top:113px;width:2px;height:2px;background:#fff"></div><div style="position:absolute;left:425px;top:117px;width:2px;height:2px;background:#fff"></div><div style="position:absolute;left:425px;top:121px;width:2px;height:2px;background:#fff"></div><div style="position:absolute;left:425px;top:125px;width:2px;height:2px;background:#fff"></div><div style="position:absolute;left:425px;top:129px;width:2px;height:2px;background:#fff"></div><div style="position:absolute;left:424px;top:100px;width:2px;height:2px;background:#56568a"></div><div style="position:absolute;left:424px;top:104px;width:2px;height:2px;background:#56568a"></div><div style="position:absolute;left:424px;top:108px;width:2px;height:2px;background:#56568a"></div><div style="position:absolute;left:424px;top:112px;width:2px;height:2px;background:#56568a"></div><div style="position:absolute;left:424px;top:116px;width:2px;height:2px;background:#56568a"></div><div style="position:absolute;left:424px;top:120px;width:2px;height:2px;background:#56568a"></div><div style="position:absolute;left:424px;top:124px;width:2px;height:2px;background:#56568a"></div><div style="position:absolute;left:424px;top:128px;width:2px;height:2px;background:#56568a"></div><svg style="position:absolute;left:431px;top:102px" width="33" height="30" viewBox="0 0 33 30"><linearGradient id="gf18" x1="0" y1="0" x2="0" y2="1"><stop offset="0" stop-color="#e8cc9c"/><stop offset="0.7" stop-color="#dcb474"/><stop offset="1" stop-color="#cc9a48"/></linearGradient><path d="M0 5.2H11.3L14.7 9.2H30V29.8H0Z" fill="url(#gf18)"/><path d="M0 29.8H30" stroke="#c08a38" stroke-width="1"/><rect x="0" y="11.2" width="30" height="0.9" fill="#fff" opacity="0.35"/><rect x="3" y="7.2" width="7" height="2.8" fill="#3aa0e0"/><rect x="18.3" y="0.3" width="13.4" height="13.6" rx="3" fill="#2f62d4"/><rect x="19.5" y="1.5" width="11" height="11.2" rx="2" fill="#3a74e6"/><g transform="translate(25,7)" fill="#fff"><rect x="-1.1" y="-5" width="2.2" height="10" transform="rotate(0)"/><rect x="-1.1" y="-5" width="2.2" height="10" transform="rotate(45)"/><rect x="-1.1" y="-5" width="2.2" height="10" transform="rotate(90)"/><rect x="-1.1" y="-5" width="2.2" height="10" transform="rotate(135)"/><circle r="3.4"/></g><circle cx="25" cy="7" r="1.3" fill="#3a74e6"/></svg><div style="position:absolute;left:468px;top:101px;width:1px;height:31px;background:#c5c5c8"></div><svg style="position:absolute;left:478px;top:101px" width="26" height="31" viewBox="0 0 26 31"><linearGradient id="gd32" x1="0" y1="0" x2="1" y2="1"><stop offset="0" stop-color="#ffffff"/><stop offset="1" stop-color="#eeeeee"/></linearGradient><path d="M0.5 0.5H17.0L25.5 9V29.5H0.5Z" fill="url(#gd32)" stroke="#c0c0c0"/><path d="M17.0 0.5Q18.0 8 25.5 9" fill="#ececec" stroke="#ccc" stroke-width="0.6"/><linearGradient id="cbg33" x1="0" y1="0" x2="1" y2="1"><stop offset="0" stop-color="#fafaf8"/><stop offset="1" stop-color="#dadad6"/></linearGradient><rect x="0.9" y="18.9" width="11" height="11" rx="0.3" fill="url(#cbg33)" stroke="#1a4a88" stroke-width="1.4"/><path d="M3.0 24.07L5.5200000000000005 27.04L9.8 21.32" stroke="#14a014" stroke-width="2.1" fill="none"/></svg><div style="position:absolute;left:513px;top:114px;width:5px;height:1px;background:#333"></div><div style="position:absolute;left:514px;top:115px;width:3px;height:1px;background:#333"></div><div style="position:absolute;left:515px;top:116px;width:1px;height:1px;background:#333"></div><svg style="position:absolute;left:527px;top:101px" width="26" height="31" viewBox="0 0 26 31"><linearGradient id="gd34" x1="0" y1="0" x2="1" y2="1"><stop offset="0" stop-color="#ffffff"/><stop offset="1" stop-color="#eeeeee"/></linearGradient><path d="M0.5 0.5H17.0L25.5 9V29.5H0.5Z" fill="url(#gd34)" stroke="#c0c0c0"/><path d="M17.0 0.5Q18.0 8 25.5 9" fill="#ececec" stroke="#ccc" stroke-width="0.6"/><linearGradient id="cbg35" x1="0" y1="0" x2="1" y2="1"><stop offset="0" stop-color="#fafaf8"/><stop offset="1" stop-color="#dadad6"/></linearGradient><rect x="0.9" y="18.9" width="11" height="11" rx="0.3" fill="url(#cbg35)" stroke="#1a4a88" stroke-width="1.4"/></svg><div style="position:absolute;left:562px;top:114px;width:5px;height:1px;background:#333"></div><div style="position:absolute;left:563px;top:115px;width:3px;height:1px;background:#333"></div><div style="position:absolute;left:564px;top:116px;width:1px;height:1px;background:#333"></div><div style="position:absolute;left:572px;top:101px;width:1px;height:31px;background:#c5c5c8"></div><svg style="position:absolute;left:580px;top:105px" width="31" height="25" viewBox="0 0 31 25"><linearGradient id="gf36" x1="0" y1="0" x2="0" y2="1"><stop offset="0" stop-color="#e8cc9c"/><stop offset="0.7" stop-color="#dcb474"/><stop offset="1" stop-color="#cc9a48"/></linearGradient><path d="M0 0H11.3L14.7 4H30V24.6H0Z" fill="url(#gf36)"/><path d="M0 24.6H30" stroke="#c08a38" stroke-width="1"/><rect x="0" y="6" width="30" height="0.9" fill="#fff" opacity="0.35"/><rect x="3" y="2" width="7" height="2.8" fill="#3aa0e0"/><linearGradient id="cbg37" x1="0" y1="0" x2="1" y2="1"><stop offset="0" stop-color="#fafaf8"/><stop offset="1" stop-color="#dadad6"/></linearGradient><rect x="18.9" y="13.7" width="10.2" height="10.2" rx="0.3" fill="url(#cbg37)" stroke="#1a4a88" stroke-width="1.4"/><path d="M21.0 18.494L23.183999999999997 21.247999999999998L26.999999999999996 15.943999999999999" stroke="#14a014" stroke-width="2.1" fill="none"/></svg><svg style="position:absolute;left:618px;top:105px" width="31" height="25" viewBox="0 0 31 25"><linearGradient id="gf38" x1="0" y1="0" x2="0" y2="1"><stop offset="0" stop-color="#e8cc9c"/><stop offset="0.7" stop-color="#dcb474"/><stop offset="1" stop-color="#cc9a48"/></linearGradient><path d="M0 0H11.3L14.7 4H30V24.6H0Z" fill="url(#gf38)"/><path d="M0 24.6H30" stroke="#c08a38" stroke-width="1"/><rect x="0" y="6" width="30" height="0.9" fill="#fff" opacity="0.35"/><rect x="3" y="2" width="7" height="2.8" fill="#3aa0e0"/><linearGradient id="cbg39" x1="0" y1="0" x2="1" y2="1"><stop offset="0" stop-color="#fafaf8"/><stop offset="1" stop-color="#dadad6"/></linearGradient><rect x="18.9" y="13.7" width="10.2" height="10.2" rx="0.3" fill="url(#cbg39)" stroke="#1a4a88" stroke-width="1.4"/></svg><div style="position:absolute;left:654px;top:101px;width:1px;height:31px;background:#c5c5c8"></div><svg style="position:absolute;left:661px;top:101px" width="12" height="31" viewBox="0 0 12 31"><linearGradient id="cbg19" x1="0" y1="0" x2="1" y2="1"><stop offset="0" stop-color="#fafaf8"/><stop offset="1" stop-color="#dadad6"/></linearGradient><rect x="1.9" y="8.9" width="11" height="11" rx="0.3" fill="url(#cbg19)" stroke="#1a4a88" stroke-width="1.4"/><path d="M4.0 14.07L6.52 17.04L10.8 11.32" stroke="#14a014" stroke-width="2.1" fill="none"/><rect x="9" y="2" width="3" height="2.5" fill="#2f62d4"/></svg><div style="position:absolute;left:3px;top:137px;width:668px;height:532px;background:#fff"></div><div style="position:absolute;left:3px;top:137px;width:649px;height:25px;background:#e1e3ec"></div><div style="position:absolute;left:258px;top:137px;width:1px;height:25px;background:#f3f3f6"></div><div style="position:absolute;left:307px;top:137px;width:1px;height:25px;background:#f3f3f6"></div><div style="position:absolute;left:377px;top:137px;width:1px;height:25px;background:#f3f3f6"></div><div style="position:absolute;left:451px;top:137px;width:1px;height:25px;background:#f3f3f6"></div><div style="position:absolute;left:512px;top:137px;width:1px;height:25px;background:#f3f3f6"></div><div style="position:absolute;left:575px;top:137px;width:1px;height:25px;background:#f3f3f6"></div><div class="t" style="left:8.2px;top:143px;color:#000;transform:scaleX(1.02);transform-origin:left center;">Group - Audio</div><div class="t" style="left:264.4px;top:143px;color:#000;transform:scaleX(1.0);transform-origin:left center;">Match</div><div class="t" style="left:313px;top:143px;color:#000;transform:scaleX(0.98);transform-origin:left center;">Duplicates</div><div class="t" style="left:383px;top:143px;color:#000;transform:scaleX(0.9);transform-origin:left center;">Size (Bytes)</div><div class="t" style="left:457px;top:143px;color:#000;transform:scaleX(1.0);transform-origin:left center;">Duration</div><div class="t" style="left:518.2px;top:143px;color:#000;transform:scaleX(0.97);transform-origin:left center;">Bit rate</div><div class="t" style="left:581.5px;top:143px;color:#000;transform:scaleX(0.94);transform-origin:left center;">Sample rate</div><div style="position:absolute;left:3px;top:162px;width:650px;height:1px;background:#f0f0f0"></div><div style="position:absolute;left:3px;top:181px;width:650px;height:1px;background:#f0f0f0"></div><div style="position:absolute;left:3px;top:200px;width:650px;height:1px;background:#f0f0f0"></div><div style="position:absolute;left:3px;top:219px;width:650px;height:1px;background:#f0f0f0"></div><div style="position:absolute;left:3px;top:238px;width:650px;height:1px;background:#f0f0f0"></div><div style="position:absolute;left:3px;top:257px;width:650px;height:1px;background:#f0f0f0"></div><div style="position:absolute;left:3px;top:276px;width:650px;height:1px;background:#f0f0f0"></div><div style="position:absolute;left:3px;top:295px;width:650px;height:1px;background:#f0f0f0"></div><div style="position:absolute;left:3px;top:314px;width:650px;height:1px;background:#f0f0f0"></div><div style="position:absolute;left:3px;top:333px;width:650px;height:1px;background:#f0f0f0"></div><div style="position:absolute;left:3px;top:352px;width:650px;height:1px;background:#f0f0f0"></div><div style="position:absolute;left:3px;top:371px;width:650px;height:1px;background:#f0f0f0"></div><div style="position:absolute;left:3px;top:390px;width:650px;height:1px;background:#f0f0f0"></div><div style="position:absolute;left:3px;top:409px;width:650px;height:1px;background:#f0f0f0"></div><div style="position:absolute;left:3px;top:428px;width:650px;height:1px;background:#f0f0f0"></div><div style="position:absolute;left:3px;top:447px;width:650px;height:1px;background:#f0f0f0"></div><div style="position:absolute;left:3px;top:466px;width:650px;height:1px;background:#f0f0f0"></div><div style="position:absolute;left:3px;top:485px;width:650px;height:1px;background:#f0f0f0"></div><div style="position:absolute;left:3px;top:504px;width:650px;height:1px;background:#f0f0f0"></div><div style="position:absolute;left:3px;top:523px;width:650px;height:1px;background:#f0f0f0"></div><div style="position:absolute;left:3px;top:542px;width:650px;height:1px;background:#f0f0f0"></div><div style="position:absolute;left:3px;top:561px;width:650px;height:1px;background:#f0f0f0"></div><div style="position:absolute;left:3px;top:580px;width:650px;height:1px;background:#f0f0f0"></div><div style="position:absolute;left:3px;top:599px;width:650px;height:1px;background:#f0f0f0"></div><div style="position:absolute;left:3px;top:618px;width:650px;height:1px;background:#f0f0f0"></div><div style="position:absolute;left:3px;top:637px;width:650px;height:1px;background:#f0f0f0"></div><div style="position:absolute;left:3px;top:656px;width:650px;height:1px;background:#f0f0f0"></div><div style="position:absolute;left:45px;top:163px;width:213px;height:18px;background:#3399ff"></div><div style="position:absolute;left:259px;top:163px;width:48px;height:18px;background:#3399ff"></div><div style="position:absolute;left:308px;top:163px;width:69px;height:18px;background:#3399ff"></div><div style="position:absolute;left:378px;top:163px;width:73px;height:18px;background:#3399ff"></div><div style="position:absolute;left:452px;top:163px;width:60px;height:18px;background:#3399ff"></div><div style="position:absolute;left:513px;top:163px;width:62px;height:18px;background:#3399ff"></div><div style="position:absolute;left:576px;top:163px;width:76px;height:18px;background:#3399ff"></div><div style="position:absolute;left:3px;top:182px;width:649px;height:18px;background:#00ffff"></div><div style="position:absolute;left:258px;top:162px;width:1px;height:495px;background:#f0f0f0"></div><div style="position:absolute;left:307px;top:162px;width:1px;height:495px;background:#f0f0f0"></div><div style="position:absolute;left:377px;top:162px;width:1px;height:495px;background:#f0f0f0"></div><div style="position:absolute;left:451px;top:162px;width:1px;height:495px;background:#f0f0f0"></div><div style="position:absolute;left:512px;top:162px;width:1px;height:495px;background:#f0f0f0"></div><div style="position:absolute;left:575px;top:162px;width:1px;height:495px;background:#f0f0f0"></div><div style="position:absolute;left:652px;top:162px;width:1px;height:495px;background:#f0f0f0"></div><div style="position:absolute;left:258px;top:163px;width:1px;height:18px;background:#f4f4f8"></div><div style="position:absolute;left:307px;top:163px;width:1px;height:18px;background:#f4f4f8"></div><div style="position:absolute;left:377px;top:163px;width:1px;height:18px;background:#f4f4f8"></div><div style="position:absolute;left:451px;top:163px;width:1px;height:18px;background:#f4f4f8"></div><div style="position:absolute;left:512px;top:163px;width:1px;height:18px;background:#f4f4f8"></div><div style="position:absolute;left:575px;top:163px;width:1px;height:18px;background:#f4f4f8"></div><svg style="position:absolute;left:27px;top:168px" width="7" height="7" viewBox="0 0 7 7"><path d="M6.5 0.5V6.5H0.5Z" fill="#3c3c3c" stroke="#1e1e1e" stroke-width="1"/></svg><svg style="position:absolute;left:44px;top:188px" width="7" height="7" viewBox="0 0 7 7"><path d="M6.5 0.5V6.5H0.5Z" fill="#3c3c3c" stroke="#1e1e1e" stroke-width="1"/></svg><div class="t" style="left:46px;top:165px;color:#fff;font-weight:bold;transform:scaleX(0.925);transform-origin:left center;">Search Result</div><div class="t" style="right:300px;top:165px;color:#fff;transform:scaleX(0.89);transform-origin:right center;">24</div><div class="t" style="right:225.5px;top:165px;color:#fff;transform:scaleX(0.89);transform-origin:right center;">68.477.735</div><div style="position:absolute;left:64px;top:185px;width:13px;height:13px;background:#fff;border:1px solid #333;box-sizing:border-box"></div><div class="t" style="left:80px;top:184px;color:#7f7f7f;transform:scaleX(0.89);transform-origin:left center;">0:00:20</div><div class="t" style="right:300px;top:184px;color:#7f7f7f;transform:scaleX(0.89);transform-origin:right center;">24</div><div class="t" style="right:225.5px;top:184px;color:#7f7f7f;transform:scaleX(0.89);transform-origin:right center;">68.477.735</div><div style="position:absolute;left:81px;top:204px;width:13px;height:13px;background:#fff;border:1px solid #333;box-sizing:border-box"></div><div class="t" style="left:97.3px;top:203px;color:#000;transform:scaleX(0.988);transform-origin:left center;">original (apple).m4a</div><div class="t" style="right:226px;top:203px;color:#000;transform:scaleX(0.89);transform-origin:right center;">3.290.577</div><div class="t" style="right:164.5px;top:203px;color:#000;transform:scaleX(0.89);transform-origin:right center;">0:00:20</div><div class="t" style="right:102px;top:203px;color:#000;transform:scaleX(0.89);transform-origin:right center;">1.308.742</div><div class="t" style="right:24.5px;top:203px;color:#000;transform:scaleX(0.89);transform-origin:right center;">44.100</div><div style="position:absolute;left:81px;top:223px;width:13px;height:13px;background:#fff;border:1px solid #333;box-sizing:border-box"></div><div class="t" style="left:97.3px;top:222px;color:#000;transform:scaleX(0.973);transform-origin:left center;">original.ac3</div><div class="t" style="right:226px;top:222px;color:#000;transform:scaleX(0.89);transform-origin:right center;">322.664</div><div class="t" style="right:164.5px;top:222px;color:#000;transform:scaleX(0.89);transform-origin:right center;">0:00:20</div><div class="t" style="right:102px;top:222px;color:#000;transform:scaleX(0.89);transform-origin:right center;">128.000</div><div class="t" style="right:24.5px;top:222px;color:#000;transform:scaleX(0.89);transform-origin:right center;">44.100</div><div style="position:absolute;left:81px;top:242px;width:13px;height:13px;background:#fff;border:1px solid #333;box-sizing:border-box"></div><div class="t" style="left:97.3px;top:241px;color:#000;transform:scaleX(1.007);transform-origin:left center;">original.aiff</div><div class="t" style="right:226px;top:241px;color:#000;transform:scaleX(0.89);transform-origin:right center;">3.553.890</div><div class="t" style="right:164.5px;top:241px;color:#000;transform:scaleX(0.89);transform-origin:right center;">0:00:20</div><div class="t" style="right:102px;top:241px;color:#000;transform:scaleX(0.89);transform-origin:right center;">1.411.200</div><div class="t" style="right:24.5px;top:241px;color:#000;transform:scaleX(0.89);transform-origin:right center;">44.100</div><div style="position:absolute;left:81px;top:261px;width:13px;height:13px;background:#fff;border:1px solid #333;box-sizing:border-box"></div><div class="t" style="left:97.3px;top:260px;color:#000;transform:scaleX(0.985);transform-origin:left center;">original.ape</div><div class="t" style="right:226px;top:260px;color:#000;transform:scaleX(0.89);transform-origin:right center;">1.263.370</div><div class="t" style="right:164.5px;top:260px;color:#000;transform:scaleX(0.89);transform-origin:right center;">0:00:20</div><div class="t" style="right:102px;top:260px;color:#000;transform:scaleX(0.89);transform-origin:right center;">501.685</div><div class="t" style="right:24.5px;top:260px;color:#000;transform:scaleX(0.89);transform-origin:right center;">44.100</div><div style="position:absolute;left:81px;top:280px;width:13px;height:13px;background:#fff;border:1px solid #333;box-sizing:border-box"></div><div class="t" style="left:97.3px;top:279px;color:#000;transform:scaleX(0.987);transform-origin:left center;">original.asf</div><div class="t" style="right:226px;top:279px;color:#000;transform:scaleX(0.89);transform-origin:right center;">2.248.054</div><div class="t" style="right:164.5px;top:279px;color:#000;transform:scaleX(0.89);transform-origin:right center;">0:00:20</div><div class="t" style="right:102px;top:279px;color:#000;transform:scaleX(0.89);transform-origin:right center;">128.000</div><div class="t" style="right:24.5px;top:279px;color:#000;transform:scaleX(0.89);transform-origin:right center;">44.100</div><div style="position:absolute;left:81px;top:299px;width:13px;height:13px;background:#fff;border:1px solid #333;box-sizing:border-box"></div><div class="t" style="left:97.3px;top:298px;color:#000;transform:scaleX(1.016);transform-origin:left center;">original.dts</div><div class="t" style="right:226px;top:298px;color:#000;transform:scaleX(0.89);transform-origin:right center;">3.558.876</div><div class="t" style="right:164.5px;top:298px;color:#000;transform:scaleX(0.89);transform-origin:right center;">0:00:20</div><div class="t" style="right:102px;top:298px;color:#000;transform:scaleX(0.89);transform-origin:right center;">1.413.000</div><div class="t" style="right:24.5px;top:298px;color:#000;transform:scaleX(0.89);transform-origin:right center;">48.000</div><div style="position:absolute;left:81px;top:318px;width:13px;height:13px;background:#fff;border:1px solid #333;box-sizing:border-box"></div><div class="t" style="left:97.3px;top:317px;color:#000;transform:scaleX(1.01);transform-origin:left center;">original.flac</div><div class="t" style="right:226px;top:317px;color:#000;transform:scaleX(0.89);transform-origin:right center;">3.058.970</div><div class="t" style="right:164.5px;top:317px;color:#000;transform:scaleX(0.89);transform-origin:right center;">0:00:20</div><div class="t" style="right:102px;top:317px;color:#000;transform:scaleX(0.89);transform-origin:right center;">1.211.344</div><div class="t" style="right:24.5px;top:317px;color:#000;transform:scaleX(0.89);transform-origin:right center;">48.000</div><div style="position:absolute;left:81px;top:337px;width:13px;height:13px;background:#fff;border:1px solid #333;box-sizing:border-box"></div><div class="t" style="left:97.3px;top:336px;color:#000;transform:scaleX(0.996);transform-origin:left center;">original.m4a</div><div class="t" style="right:226px;top:336px;color:#000;transform:scaleX(0.89);transform-origin:right center;">328.018</div><div class="t" style="right:164.5px;top:336px;color:#000;transform:scaleX(0.89);transform-origin:right center;">0:00:20</div><div class="t" style="right:102px;top:336px;color:#000;transform:scaleX(0.89);transform-origin:right center;">128.510</div><div class="t" style="right:24.5px;top:336px;color:#000;transform:scaleX(0.89);transform-origin:right center;">44.100</div><div style="position:absolute;left:81px;top:356px;width:13px;height:13px;background:#fff;border:1px solid #333;box-sizing:border-box"></div><div class="t" style="left:97.3px;top:355px;color:#000;transform:scaleX(1.012);transform-origin:left center;">original.mp2</div><div class="t" style="right:226px;top:355px;color:#000;transform:scaleX(0.89);transform-origin:right center;">322.664</div><div class="t" style="right:164.5px;top:355px;color:#000;transform:scaleX(0.89);transform-origin:right center;">0:00:20</div><div class="t" style="right:102px;top:355px;color:#000;transform:scaleX(0.89);transform-origin:right center;">128.000</div><div class="t" style="right:24.5px;top:355px;color:#000;transform:scaleX(0.89);transform-origin:right center;">44.100</div><div style="position:absolute;left:81px;top:375px;width:13px;height:13px;background:#fff;border:1px solid #333;box-sizing:border-box"></div><div class="t" style="left:97.3px;top:374px;color:#000;transform:scaleX(1.012);transform-origin:left center;">original.mp3</div><div class="t" style="right:226px;top:374px;color:#000;transform:scaleX(0.89);transform-origin:right center;">323.815</div><div class="t" style="right:164.5px;top:374px;color:#000;transform:scaleX(0.89);transform-origin:right center;">0:00:20</div><div class="t" style="right:102px;top:374px;color:#000;transform:scaleX(0.89);transform-origin:right center;">128.000</div><div class="t" style="right:24.5px;top:374px;color:#000;transform:scaleX(0.89);transform-origin:right center;">44.100</div><div style="position:absolute;left:81px;top:394px;width:13px;height:13px;background:#fff;border:1px solid #333;box-sizing:border-box"></div><div class="t" style="left:97.3px;top:393px;color:#000;transform:scaleX(1.028);transform-origin:left center;">original.ogg</div><div class="t" style="right:226px;top:393px;color:#000;transform:scaleX(0.89);transform-origin:right center;">244.166</div><div class="t" style="right:164.5px;top:393px;color:#000;transform:scaleX(0.89);transform-origin:right center;">0:00:20</div><div class="t" style="right:102px;top:393px;color:#000;transform:scaleX(0.89);transform-origin:right center;">128.000</div><div class="t" style="right:24.5px;top:393px;color:#000;transform:scaleX(0.89);transform-origin:right center;">44.100</div><div style="position:absolute;left:81px;top:413px;width:13px;height:13px;background:#fff;border:1px solid #333;box-sizing:border-box"></div><div class="t" style="left:97.3px;top:412px;color:#000;transform:scaleX(0.996);transform-origin:left center;">original.wav</div><div class="t" style="right:226px;top:412px;color:#000;transform:scaleX(0.89);transform-origin:right center;">3.868.198</div><div class="t" style="right:164.5px;top:412px;color:#000;transform:scaleX(0.89);transform-origin:right center;">0:00:20</div><div class="t" style="right:102px;top:412px;color:#000;transform:scaleX(0.89);transform-origin:right center;">1.536.000</div><div class="t" style="right:24.5px;top:412px;color:#000;transform:scaleX(0.89);transform-origin:right center;">48.000</div><div style="position:absolute;left:81px;top:432px;width:13px;height:13px;background:#fff;border:1px solid #333;box-sizing:border-box"></div><div class="t" style="left:97.3px;top:431px;color:#000;transform:scaleX(1.011);transform-origin:left center;">original.wma</div><div class="t" style="right:226px;top:431px;color:#000;transform:scaleX(0.89);transform-origin:right center;">695.495</div><div class="t" style="right:164.5px;top:431px;color:#000;transform:scaleX(0.89);transform-origin:right center;">0:00:20</div><div class="t" style="right:102px;top:431px;color:#000;transform:scaleX(0.89);transform-origin:right center;">192.000</div><div class="t" style="right:24.5px;top:431px;color:#000;transform:scaleX(0.89);transform-origin:right center;">44.100</div><div style="position:absolute;left:81px;top:451px;width:13px;height:13px;background:#fff;border:1px solid #333;box-sizing:border-box"></div><div class="t" style="left:97.3px;top:450px;color:#000;transform:scaleX(1.026);transform-origin:left center;">original.wmv</div><div class="t" style="right:226px;top:450px;color:#000;transform:scaleX(0.89);transform-origin:right center;">979.859</div><div class="t" style="right:164.5px;top:450px;color:#000;transform:scaleX(0.89);transform-origin:right center;">0:00:20</div><div class="t" style="right:102px;top:450px;color:#000;transform:scaleX(0.89);transform-origin:right center;">64.040</div><div class="t" style="right:24.5px;top:450px;color:#000;transform:scaleX(0.89);transform-origin:right center;">44.100</div><div style="position:absolute;left:81px;top:470px;width:13px;height:13px;background:#fff;border:1px solid #333;box-sizing:border-box"></div><div class="t" style="left:97.3px;top:469px;color:#000;transform:scaleX(1.001);transform-origin:left center;">original_libtheora.ogv</div><div class="t" style="right:226px;top:469px;color:#000;transform:scaleX(0.89);transform-origin:right center;">2.286.010</div><div class="t" style="right:164.5px;top:469px;color:#000;transform:scaleX(0.89);transform-origin:right center;">0:00:20</div><div class="t" style="right:102px;top:469px;color:#000;transform:scaleX(0.89);transform-origin:right center;">128.000</div><div class="t" style="right:24.5px;top:469px;color:#000;transform:scaleX(0.89);transform-origin:right center;">44.100</div><div style="position:absolute;left:81px;top:489px;width:13px;height:13px;background:#fff;border:1px solid #333;box-sizing:border-box"></div><div class="t" style="left:97.3px;top:488px;color:#000;transform:scaleX(1.006);transform-origin:left center;">original_mpeg1video.mpg</div><div class="t" style="right:226px;top:488px;color:#000;transform:scaleX(0.89);transform-origin:right center;">3.231.744</div><div class="t" style="right:164.5px;top:488px;color:#000;transform:scaleX(0.89);transform-origin:right center;">0:00:20</div><div class="t" style="right:102px;top:488px;color:#000;transform:scaleX(0.89);transform-origin:right center;">128.000</div><div class="t" style="right:24.5px;top:488px;color:#000;transform:scaleX(0.89);transform-origin:right center;">44.100</div><div style="position:absolute;left:81px;top:508px;width:13px;height:13px;background:#fff;border:1px solid #333;box-sizing:border-box"></div><div class="t" style="left:97.3px;top:507px;color:#000;transform:scaleX(1.006);transform-origin:left center;">original_mpeg2video.mpg</div><div class="t" style="right:226px;top:507px;color:#000;transform:scaleX(0.89);transform-origin:right center;">4.941.824</div><div class="t" style="right:164.5px;top:507px;color:#000;transform:scaleX(0.89);transform-origin:right center;">0:00:20</div><div class="t" style="right:102px;top:507px;color:#000;transform:scaleX(0.89);transform-origin:right center;">128.000</div><div class="t" style="right:24.5px;top:507px;color:#000;transform:scaleX(0.89);transform-origin:right center;">44.100</div><div style="position:absolute;left:81px;top:527px;width:13px;height:13px;background:#fff;border:1px solid #333;box-sizing:border-box"></div><div class="t" style="left:97.3px;top:526px;color:#000;transform:scaleX(0.969);transform-origin:left center;">original_VP8.webm</div><div class="t" style="right:226px;top:526px;color:#000;transform:scaleX(0.89);transform-origin:right center;">2.710.494</div><div class="t" style="right:164.5px;top:526px;color:#000;transform:scaleX(0.89);transform-origin:right center;">0:00:20</div><div class="t" style="right:102px;top:526px;color:#000;transform:scaleX(0.89);transform-origin:right center;">128.000</div><div class="t" style="right:24.5px;top:526px;color:#000;transform:scaleX(0.89);transform-origin:right center;">44.100</div><div style="position:absolute;left:81px;top:546px;width:13px;height:13px;background:#fff;border:1px solid #333;box-sizing:border-box"></div><div class="t" style="left:97.3px;top:545px;color:#000;transform:scaleX(0.96);transform-origin:left center;">original_x264.m2ts</div><div class="t" style="right:226px;top:545px;color:#000;transform:scaleX(0.89);transform-origin:right center;">7.596.864</div><div class="t" style="right:164.5px;top:545px;color:#000;transform:scaleX(0.89);transform-origin:right center;">0:00:20</div><div class="t" style="right:102px;top:545px;color:#000;transform:scaleX(0.89);transform-origin:right center;">0</div><div class="t" style="right:24.5px;top:545px;color:#000;transform:scaleX(0.89);transform-origin:right center;">48.000</div><div style="position:absolute;left:81px;top:565px;width:13px;height:13px;background:#fff;border:1px solid #333;box-sizing:border-box"></div><div class="t" style="left:97.3px;top:564px;color:#000;transform:scaleX(0.96);transform-origin:left center;">original_x264.m4v</div><div class="t" style="right:226px;top:564px;color:#000;transform:scaleX(0.89);transform-origin:right center;">5.371.019</div><div class="t" style="right:164.5px;top:564px;color:#000;transform:scaleX(0.89);transform-origin:right center;">0:00:20</div><div class="t" style="right:102px;top:564px;color:#000;transform:scaleX(0.89);transform-origin:right center;">128.540</div><div class="t" style="right:24.5px;top:564px;color:#000;transform:scaleX(0.89);transform-origin:right center;">44.100</div><div style="position:absolute;left:81px;top:584px;width:13px;height:13px;background:#fff;border:1px solid #333;box-sizing:border-box"></div><div class="t" style="left:97.3px;top:583px;color:#000;transform:scaleX(0.97);transform-origin:left center;">original_x264.mkv</div><div class="t" style="right:226px;top:583px;color:#000;transform:scaleX(0.89);transform-origin:right center;">5.374.411</div><div class="t" style="right:164.5px;top:583px;color:#000;transform:scaleX(0.89);transform-origin:right center;">0:00:20</div><div class="t" style="right:102px;top:583px;color:#000;transform:scaleX(0.89);transform-origin:right center;">128.000</div><div class="t" style="right:24.5px;top:583px;color:#000;transform:scaleX(0.89);transform-origin:right center;">44.100</div><div style="position:absolute;left:81px;top:603px;width:13px;height:13px;background:#fff;border:1px solid #333;box-sizing:border-box"></div><div class="t" style="left:97.3px;top:602px;color:#000;transform:scaleX(0.966);transform-origin:left center;">original_x264.mov</div><div class="t" style="right:226px;top:602px;color:#000;transform:scaleX(0.89);transform-origin:right center;">5.371.086</div><div class="t" style="right:164.5px;top:602px;color:#000;transform:scaleX(0.89);transform-origin:right center;">0:00:20</div><div class="t" style="right:102px;top:602px;color:#000;transform:scaleX(0.89);transform-origin:right center;">128.540</div><div class="t" style="right:24.5px;top:602px;color:#000;transform:scaleX(0.89);transform-origin:right center;">44.100</div><div style="position:absolute;left:81px;top:622px;width:13px;height:13px;background:#fff;border:1px solid #333;box-sizing:border-box"></div><div class="t" style="left:97.3px;top:621px;color:#000;transform:scaleX(0.953);transform-origin:left center;">original_x264.mp4</div><div class="t" style="right:226px;top:621px;color:#000;transform:scaleX(0.89);transform-origin:right center;">5.370.995</div><div class="t" style="right:164.5px;top:621px;color:#000;transform:scaleX(0.89);transform-origin:right center;">0:00:20</div><div class="t" style="right:102px;top:621px;color:#000;transform:scaleX(0.89);transform-origin:right center;">128.540</div><div class="t" style="right:24.5px;top:621px;color:#000;transform:scaleX(0.89);transform-origin:right center;">44.100</div><div style="position:absolute;left:81px;top:641px;width:13px;height:13px;background:#fff;border:1px solid #333;box-sizing:border-box"></div><div class="t" style="left:97.3px;top:640px;color:#000;transform:scaleX(0.978);transform-origin:left center;">original_xvid.avi</div><div class="t" style="right:226px;top:640px;color:#000;transform:scaleX(0.89);transform-origin:right center;">2.164.672</div><div class="t" style="right:164.5px;top:640px;color:#000;transform:scaleX(0.89);transform-origin:right center;">0:00:20</div><div class="t" style="right:102px;top:640px;color:#000;transform:scaleX(0.89);transform-origin:right center;">128.000</div><div class="t" style="right:24.5px;top:640px;color:#000;transform:scaleX(0.89);transform-origin:right center;">44.100</div>
</body></html>
